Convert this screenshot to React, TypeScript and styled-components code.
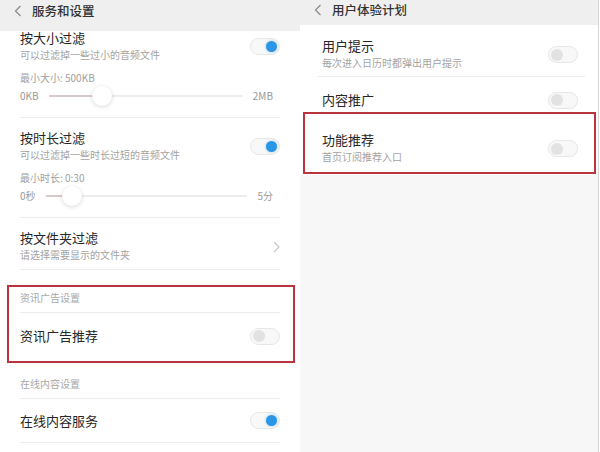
import React from "react";
import styled, { createGlobalStyle } from "styled-components";

const Global = createGlobalStyle`
  html, body { margin: 0; padding: 0; background: #fff; }
  body {
    font-family: "Noto Sans CJK SC", "Noto Sans", sans-serif;
    -webkit-font-smoothing: antialiased;
  }
`;

const Page = styled.div`
  display: flex;
  width: 600px;
  height: 452px;
  overflow: hidden;
  background: #fff;
`;

const Panel = styled.div<{ $bg: string; $w: number; $edge?: boolean }>`
  width: ${(p) => p.$w}px;
  flex: none;
  display: flex;
  flex-direction: column;
  background: ${(p) => p.$bg};
  ${(p) => (p.$edge ? "border-right: 1px solid #d6d6d6;" : "")}
`;

const Header = styled.div<{ $h: number; $top: number }>`
  height: ${(p) => p.$h}px;
  box-sizing: border-box;
  padding: ${(p) => p.$top}px 0 0 14px;
  background: #efefef;
  display: flex;
  align-items: flex-start;
  gap: 10px;
  flex: none;
`;

const HeaderTitle = styled.span`
  font-size: 12.5px;
  line-height: 16px;
  color: #333;
  font-weight: 500;
`;

const BackIcon = styled.svg`
  margin-top: 2px;
  flex: none;
`;

const Group = styled.div`
  margin: 0 20px;
`;

const Item = styled.div<{ $pt: number; $pb: number; $line?: boolean }>`
  padding: ${(p) => p.$pt}px 0 ${(p) => p.$pb}px;
  border-bottom: ${(p) => (p.$line ? "1px solid #ececec" : "none")};
`;

const ItemHead = styled.div`
  display: flex;
  align-items: center;
  justify-content: space-between;
`;

const Texts = styled.div`
  display: flex;
  flex-direction: column;
`;

const Title = styled.div`
  font-size: 13px;
  line-height: 14px;
  color: #262626;
`;

const Sub = styled.div`
  font-size: 10px;
  line-height: 14px;
  color: #a3a3a3;
  margin-top: 3px;
`;

const SliderLabel = styled.div`
  font-size: 10px;
  line-height: 14px;
  color: #a0a0a0;
  margin-top: 9px;
`;

const SliderRow = styled.div`
  display: flex;
  align-items: center;
  gap: 10px;
  height: 20px;
  margin-top: 1px;
  padding-right: 7px;
`;

const SliderEnd = styled.span`
  font-size: 10px;
  line-height: 14px;
  color: #9a9a9a;
`;

const Track = styled.div`
  position: relative;
  flex: 1;
  height: 2px;
  background: #ededed;
  border-radius: 1px;
`;

const Fill = styled.div`
  position: absolute;
  left: 0;
  top: 0;
  bottom: 0;
  background: #d6caca;
`;

const Thumb = styled.div`
  position: absolute;
  top: 50%;
  width: 20px;
  height: 20px;
  margin: -10px 0 0 -10px;
  border-radius: 50%;
  background: #fff;
  box-shadow: 0 1px 4px rgba(0, 0, 0, 0.16);
`;

const GroupLabel = styled.div<{ $pt: number }>`
  margin: 0 20px;
  padding: ${(p) => p.$pt}px 0 7px;
  font-size: 10px;
  line-height: 14px;
  color: #a8a8a8;
  border-bottom: 1px solid #ececec;
`;

const SwitchRow = styled.div<{ $h: number; $line?: boolean }>`
  margin: 0 20px;
  height: ${(p) => p.$h}px;
  display: flex;
  align-items: center;
  justify-content: space-between;
  border-bottom: ${(p) => (p.$line ? "1px solid #ececec" : "none")};
`;

const Highlight = styled.div<{ $t: number; $r: number; $b: number; $l: number }>`
  position: relative;
  &::after {
    content: "";
    position: absolute;
    top: ${(p) => p.$t}px;
    right: ${(p) => p.$r}px;
    bottom: ${(p) => p.$b}px;
    left: ${(p) => p.$l}px;
    border: 2px solid #b9343c;
    pointer-events: none;
  }
`;

const ToggleTrack = styled.div<{ $on: boolean }>`
  width: 30px;
  height: 17px;
  box-sizing: border-box;
  border-radius: 9px;
  border: 1px solid #e6e6e6;
  background: #f8f8f8;
  display: flex;
  align-items: center;
  justify-content: ${(p) => (p.$on ? "flex-end" : "flex-start")};
  padding: 0 2px;
  flex: none;
`;

const ToggleKnob = styled.div<{ $on: boolean }>`
  width: ${(p) => (p.$on ? 11 : 12)}px;
  height: ${(p) => (p.$on ? 11 : 12)}px;
  border-radius: 50%;
  background: ${(p) => (p.$on ? "#2b95e6" : "#e2e2e2")};
  box-shadow: ${(p) => (p.$on ? "0 0 3px rgba(43,149,230,0.45)" : "none")};
`;

const RightList = styled.div`
  background: #fff;
  flex: none;
`;

const RItem = styled.div<{ $pt: number; $pb: number; $line?: boolean }>`
  margin: 0 13px 0 18px;
  padding: ${(p) => p.$pt}px 7px ${(p) => p.$pb}px 4px;
  border-bottom: ${(p) => (p.$line ? "1px solid #ececec" : "none")};
`;

const RSwitchRow = styled.div<{ $h: number }>`
  margin: 0 13px 0 18px;
  padding: 0 7px 0 4px;
  height: ${(p) => p.$h}px;
  display: flex;
  align-items: center;
  justify-content: space-between;
`;

const Toggle = ({ on }: { on: boolean }) => (
  <ToggleTrack $on={on}>
    <ToggleKnob $on={on} />
  </ToggleTrack>
);

const Back = () => (
  <BackIcon width="8" height="12" viewBox="0 0 8 12">
    <polyline points="6.5,1 1.5,6 6.5,11" fill="none" stroke="#8a8a8a" strokeWidth="1.2" />
  </BackIcon>
);

const Chevron = () => (
  <svg width="7" height="12" viewBox="0 0 7 12">
    <polyline points="1,1 6,6 1,11" fill="none" stroke="#c4c4c4" strokeWidth="1.1" />
  </svg>
);

const Slider = ({ min, max, pct }: { min: string; max: string; pct: number }) => (
  <SliderRow>
    <SliderEnd>{min}</SliderEnd>
    <Track>
      <Fill style={{ width: `${pct}%` }} />
      <Thumb style={{ left: `${pct}%` }} />
    </Track>
    <SliderEnd>{max}</SliderEnd>
  </SliderRow>
);

export default function App() {
  return (
    <>
      <Global />
      <Page>
        <Panel $bg="#fff" $w={300}>
          <Header $h={31} $top={3}>
            <Back />
            <HeaderTitle>服务和设置</HeaderTitle>
          </Header>
          <Group>
            <Item $pt={0} $pb={11} $line>
              <ItemHead>
                <Texts>
                  <Title>按大小过滤</Title>
                  <Sub>可以过滤掉一些过小的音频文件</Sub>
                </Texts>
                <Toggle on />
              </ItemHead>
              <SliderLabel>最小大小: 500KB</SliderLabel>
              <Slider min="0KB" max="2MB" pct={27.5} />
            </Item>
            <Item $pt={13} $pb={11} $line>
              <ItemHead>
                <Texts>
                  <Title>按时长过滤</Title>
                  <Sub>可以过滤掉一些时长过短的音频文件</Sub>
                </Texts>
                <Toggle on />
              </ItemHead>
              <SliderLabel>最小时长: 0:30</SliderLabel>
              <Slider min="0秒" max="5分" pct={13} />
            </Item>
            <Item $pt={13} $pb={7} $line>
              <ItemHead>
                <Texts>
                  <Title>按文件夹过滤</Title>
                  <Sub>请选择需要显示的文件夹</Sub>
                </Texts>
                <Chevron />
              </ItemHead>
            </Item>
          </Group>
          <Highlight $t={15} $r={5} $b={-4} $l={7}>
            <GroupLabel $pt={21}>资讯广告设置</GroupLabel>
            <SwitchRow $h={46}>
              <Title>资讯广告推荐</Title>
              <Toggle on={false} />
            </SwitchRow>
          </Highlight>
          <GroupLabel $pt={18}>在线内容设置</GroupLabel>
          <SwitchRow $h={43} $line>
            <Title>在线内容服务</Title>
            <Toggle on />
          </SwitchRow>
        </Panel>
        <Panel $bg="#f7f7f7" $w={298} $edge>
          <Header $h={25} $top={2}>
            <Back />
            <HeaderTitle>用户体验计划</HeaderTitle>
          </Header>
          <RightList>
            <RItem $pt={14} $pb={6} $line>
              <ItemHead>
                <Texts>
                  <Title>用户提示</Title>
                  <Sub>每次进入日历时都弹出用户提示</Sub>
                </Texts>
                <Toggle on={false} />
              </ItemHead>
            </RItem>
            <RSwitchRow $h={46}>
              <Title>内容推广</Title>
              <Toggle on={false} />
            </RSwitchRow>
            <Highlight $t={-11} $r={2} $b={1} $l={3}>
              <RItem $pt={10} $pb={11}>
                <ItemHead>
                  <Texts>
                    <Title>功能推荐</Title>
                    <Sub>首页订阅推荐入口</Sub>
                  </Texts>
                  <Toggle on={false} />
                </ItemHead>
              </RItem>
            </Highlight>
          </RightList>
        </Panel>
      </Page>
    </>
  );
}
